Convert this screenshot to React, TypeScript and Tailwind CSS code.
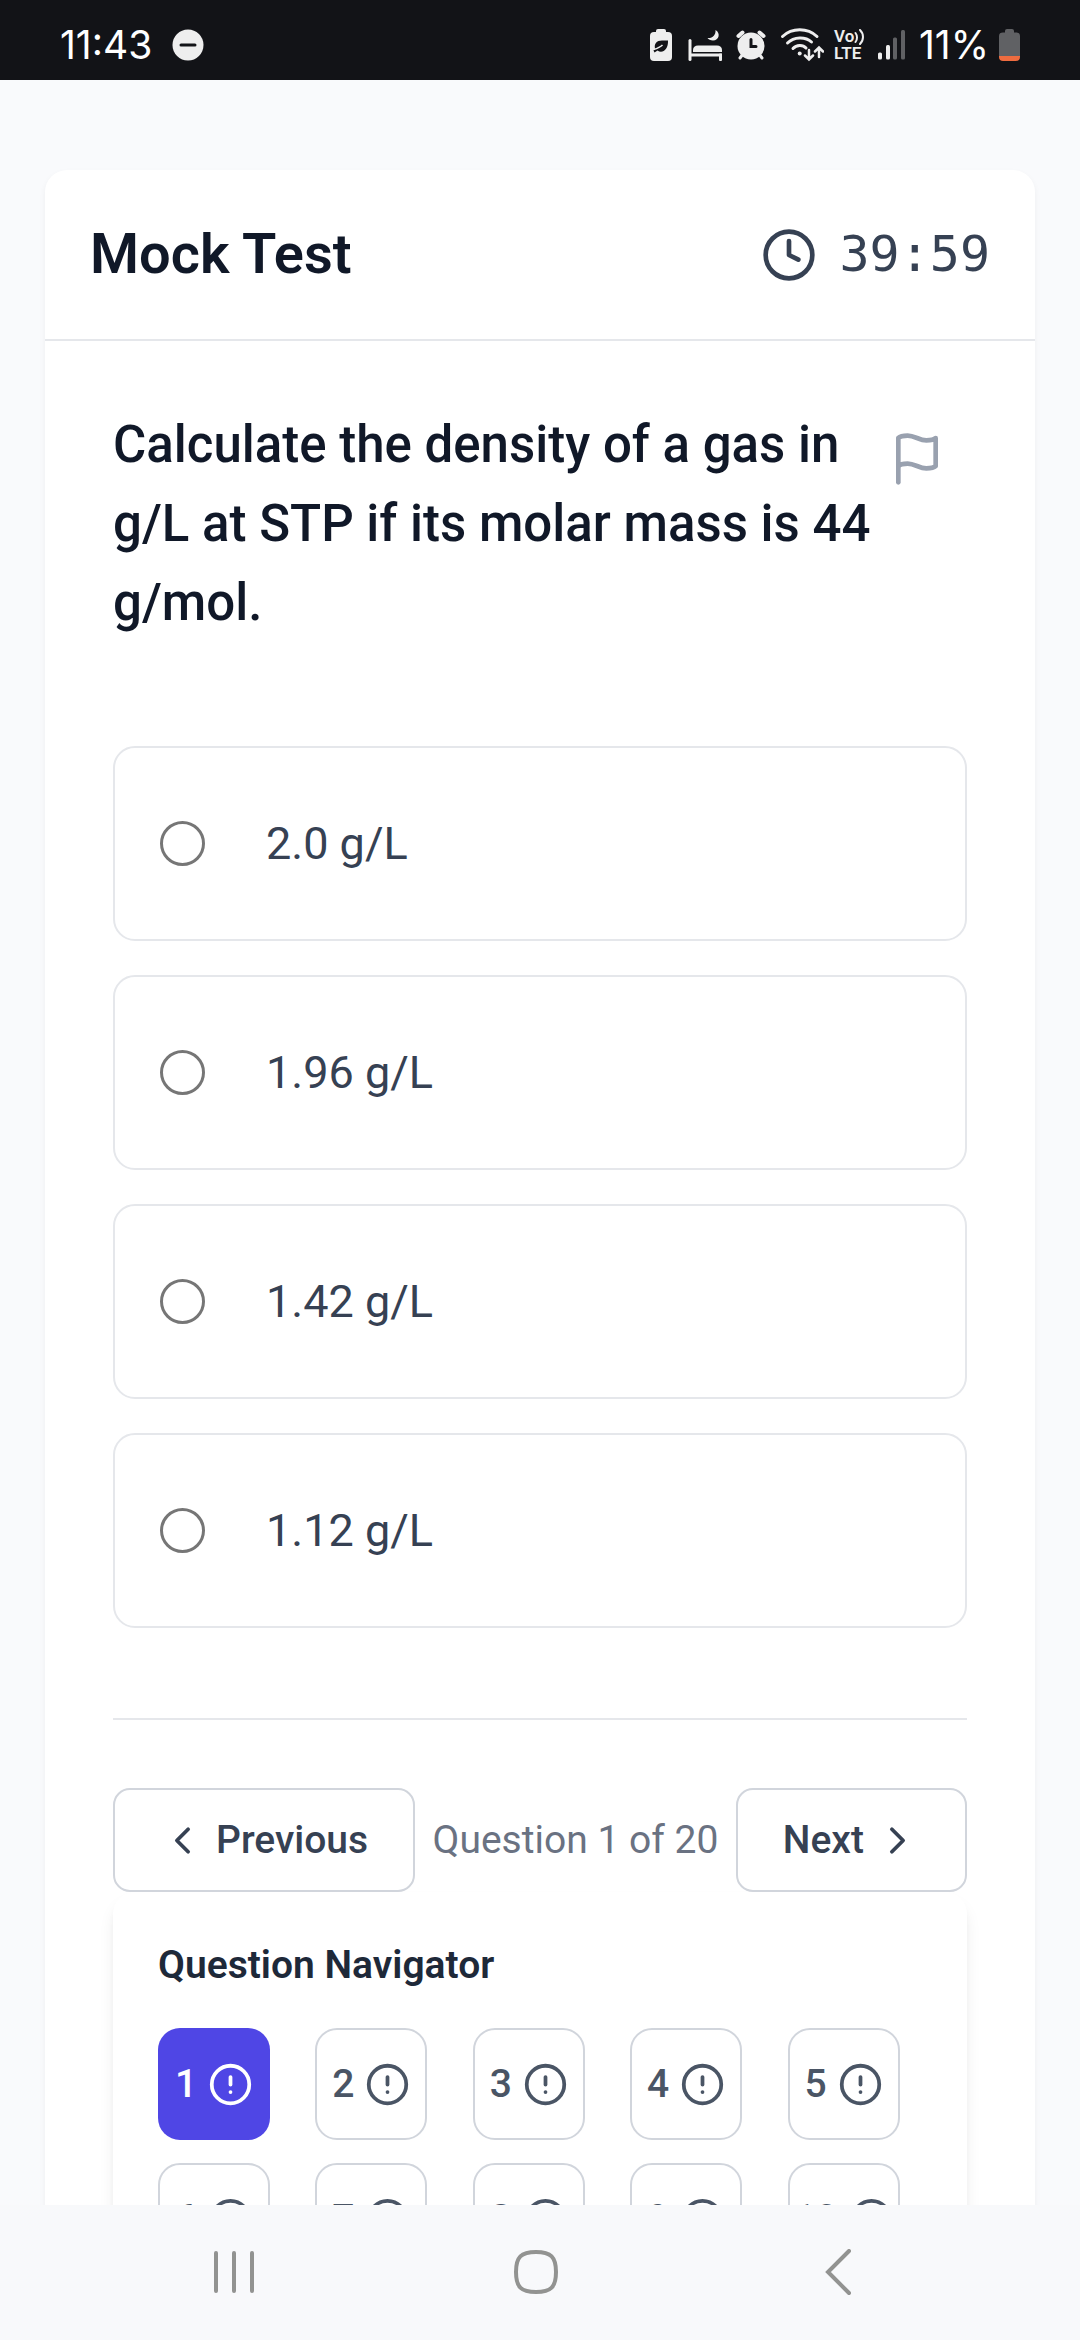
import { useState } from "react";
import { ChevronLeft, ChevronRight, CircleAlert, Clock } from "lucide-react";

const OPTIONS = ["2.0 g/L", "1.96 g/L", "1.42 g/L", "1.12 g/L"];
const TOTAL_QUESTIONS = 20;

function StatusIcons() {
  return (
    <div className="flex items-center gap-2.5 text-[#eeeeee]">
      {/* Power saving battery */}
      <svg className="h-[34px] w-7" viewBox="0 0 28 34" fill="currentColor">
        <rect x="6" y="1" width="10" height="8" rx="2" />
        <rect x="0" y="4" width="22" height="29" rx="4" />
        <path d="M18 12.5H12C6.5 12.5 4 16 5 20.5L3.5 22.5L4.5 24.5L7.5 22.5C12 26 18.5 22 18 12.5Z" fill="#121317" />
        <path d="M3.5 21.5C7 20.5 10 19.5 12.5 17" stroke="#eeeeee" strokeWidth="1.5" fill="none" />
      </svg>
      {/* Sleep mode */}
      <svg className="h-[34px] w-[38px]" viewBox="0 0 38 34" fill="currentColor">
        <rect x="0.5" y="11" width="3" height="22" rx="1.5" />
        <path d="M5 24V22C5 19 7 17.5 10 17.5H29C32 17.5 34 19 34 22V24Z" />
        <rect x="2" y="25.5" width="32" height="3" />
        <rect x="31" y="25.5" width="3" height="7.5" rx="1" />
        <path d="M27.5 2C33 5 31 12.5 25 12.5C22.5 12.5 20.5 11.5 19.5 10C24.5 10.5 28 7 27.5 2Z" />
      </svg>
      {/* Alarm */}
      <svg className="h-[34px] w-[33px]" viewBox="0 0 33 34" fill="none" stroke="currentColor" strokeLinecap="round">
        <path d="M2.5 8L6.5 4.500M23.5 4.500L27.5 8" strokeWidth="4" />
        <path d="M7 26L4 30M23 26L26 30" strokeWidth="3" />
        <circle cx="15" cy="18" r="13.5" fill="currentColor" stroke="none" />
        <path d="M15 11.5V18.5H20" stroke="#121317" strokeWidth="3" />
      </svg>
      {/* Wi-Fi with traffic arrows */}
      <svg className="h-[34px] w-[45px]" viewBox="0 0 45 34" fill="none" stroke="currentColor" strokeWidth="3" strokeLinecap="round">
        <path d="M3.5 8.5C13 -0.5 28.5 -0.5 38 8.5" />
        <path d="M8.5 15C15 8.5 26.5 8.5 32.5 14" />
        <path d="M14 20.5C17.5 16.5 24 16.5 27 20" />
        <circle cx="20.7" cy="25.5" r="2" fill="currentColor" stroke="none" />
        <path d="M30 22V31M26 27.5L30 31.500L34 27.5M40 29V20M36 23.5L40 19.5L44 23.5" strokeWidth="2.5" />
      </svg>
      <div className="w-[34px] text-[17px] leading-[17px] font-semibold">
        <div className="flex items-center">
          Vo
          <svg className="h-4 w-[11px]" viewBox="0 0 11 16" fill="none" stroke="currentColor" strokeWidth="2" strokeLinecap="round">
            <path d="M1.5 4C3.5 6.5 3.5 10.5 1.5 13M6 1C10 5 10 11 6 15" />
          </svg>
        </div>
        <div>LTE</div>
      </div>
      {/* Signal */}
      <svg className="h-[34px] w-[31px]" viewBox="0 0 31 34" fill="currentColor">
        <rect x="0" y="24.5" width="4" height="7" rx="1.5" />
        <rect x="8" y="17" width="4" height="14.5" rx="1.5" />
        <rect x="15" y="9.5" width="4" height="22" rx="1.5" fill="#606164" />
        <rect x="23" y="2" width="4" height="29.5" rx="1.5" fill="#606164" />
      </svg>
      <span className="font-['Inter',sans-serif] text-[39px] leading-10 text-white">11%</span>
      <svg className="h-[34px] w-[21px]" viewBox="0 0 21 34">
        <rect x="6" y="1" width="9" height="8" rx="2" fill="#606164" />
        <path d="M0 8C0 5.5 1.5 4.5 4 4.5H17C19.5 4.5 21 5.5 21 8V28H0Z" fill="#606164" />
        <path d="M0 28H21V29C21 31.5 19.5 33 17 33H4C1.5 33 0 31.5 0 29Z" fill="#ee6c40" />
      </svg>
    </div>
  );
}

function StatusBar() {
  return (
    <div className="flex h-20 shrink-0 items-center justify-between bg-[#121317] px-[60px] pt-2.5">
      <div className="flex items-center gap-5">
        <span className="font-['Inter',sans-serif] text-[39px] leading-10 text-white">11:43</span>
        <svg className="h-8 w-8" viewBox="0 0 32 32">
          <circle cx="16" cy="16" r="15.5" fill="#eeeeee" />
          <path d="M9 16H23" stroke="#121317" strokeWidth="3" strokeLinecap="round" />
        </svg>
      </div>
      <StatusIcons />
    </div>
  );
}

function SystemNav() {
  return (
    <nav className="grid h-[135px] shrink-0 grid-cols-3 items-center justify-items-center bg-[#f8f9fb] pr-[91px] pl-[83px] text-[#929391]">
      <button aria-label="Recent apps">
        <svg className="h-12 w-12" viewBox="0 0 48 48" fill="none" stroke="currentColor" strokeWidth="4" strokeLinecap="round">
          <path d="M6 4V42M24 4V42M42 4V42" />
        </svg>
      </button>
      <button aria-label="Home">
        <svg className="h-12 w-12" viewBox="0 0 48 48" fill="none" stroke="currentColor" strokeWidth="4">
          <path d="M24 3C39 3 44 8 44 23C44 38 39 43 24 43C9 43 4 38 4 23C4 8 9 3 24 3Z" />
        </svg>
      </button>
      <button aria-label="Back">
        <svg className="h-12 w-12" viewBox="0 0 48 48" fill="none" stroke="currentColor" strokeWidth="4" strokeLinecap="round">
          <path d="M35 2L14 23L35 44" />
        </svg>
      </button>
    </nav>
  );
}

export default function App() {
  const [current, setCurrent] = useState(1);
  const [answers, setAnswers] = useState<Record<number, string>>({});

  return (
    <div className="flex h-screen flex-col bg-[#f9fafc] font-['Roboto',sans-serif]">
      <StatusBar />

      <main className="min-h-0 flex-1 overflow-y-auto px-[45px] pt-[90px] [scrollbar-width:none]">
        <div className="rounded-[22px] bg-white shadow-[0_3px_6px_rgba(0,0,0,0.05)]">
          {/* Header */}
          <header className="flex items-center justify-between border-b-2 border-gray-200 p-[45px]">
            <h1 className="text-[56px] leading-[79px] font-semibold text-gray-900">Mock Test</h1>
            <div className="flex items-center gap-[22px] text-gray-700">
              <Clock size={56} />
              <span className="font-['DejaVu_Sans_Mono',monospace] text-[50px] leading-[79px]">39:59</span>
            </div>
          </header>

          <div className="px-[68px] pt-16 pb-[68px]">
            {/* Question */}
            <div className="mb-[104px] flex items-start justify-between">
              <h2 className="text-[51px] leading-[79px] font-medium text-gray-900">
                Calculate the density of a gas in g/L at STP if its molar mass is 44 g/mol.
              </h2>
              <button aria-label="Flag question" className="shrink-0 py-[26px] pr-[22px] pl-4 text-gray-400">
                <svg className="h-14 w-14" viewBox="0 0 24 24" fill="none" stroke="currentColor" strokeWidth="2" strokeLinecap="round" strokeLinejoin="round">
                  <path d="M4 15s1-1 4-1 5 2 8 2 4-1 4-1V3s-1 1-4 1-5-2-8-2-4 1-4 1z" />
                  <path d="M4 22v-7" />
                </svg>
              </button>
            </div>

            {/* Options */}
            <div className="space-y-[34px]">
              {OPTIONS.map((option) => (
                <label
                  key={option}
                  className="flex items-center gap-[61px] rounded-[22px] border-2 border-gray-200 px-[45px] py-[60px] text-[45px] leading-[71px] text-gray-700"
                >
                  <input
                    type="radio"
                    name="answer"
                    checked={answers[current] === option}
                    onChange={() => setAnswers((prev) => ({ ...prev, [current]: option }))}
                    className="h-[45px] w-[45px] shrink-0 appearance-none rounded-full border-3 border-[#767676] checked:border-[14px] checked:border-[#4f46e5]"
                  />
                  {option}
                </label>
              ))}
            </div>

            {/* Pager */}
            <div className="mt-[90px] flex items-center justify-between border-t-2 border-gray-200 pt-[68px] text-[39px] leading-14">
              <button
                onClick={() => setCurrent((c) => Math.max(1, c - 1))}
                className="flex items-center gap-[11px] rounded-[17px] border-2 border-gray-300 px-[45px] py-[22px] font-medium text-gray-700"
              >
                <ChevronLeft size={45} />
                Previous
              </button>
              <span className="text-gray-500">
                Question {current} of {TOTAL_QUESTIONS}
              </span>
              <button
                onClick={() => setCurrent((c) => Math.min(TOTAL_QUESTIONS, c + 1))}
                className="flex items-center gap-[11px] rounded-[17px] border-2 border-gray-300 px-[45px] py-[22px] font-medium text-gray-700"
              >
                Next
                <ChevronRight size={45} />
              </button>
            </div>

            {/* Question Navigator */}
            <section className="rounded-[22px] bg-white p-[45px] shadow-[0_11px_17px_-3px_rgba(0,0,0,0.1),0_6px_11px_-6px_rgba(0,0,0,0.1)]">
              <h3 className="mb-[35px] text-[39px] leading-14 font-semibold text-gray-800">Question Navigator</h3>
              <div className="grid grid-cols-5 gap-[23px]">
                {Array.from({ length: TOTAL_QUESTIONS }, (_, i) => i + 1).map((n) => (
                  <button
                    key={n}
                    onClick={() => setCurrent(n)}
                    className={`flex h-28 w-28 items-center justify-center gap-[11px] rounded-[22px] text-[39px] leading-14 font-medium ${
                      n === current ? "bg-[#4f46e5] text-white" : "border-2 border-gray-300 text-gray-600"
                    }`}
                  >
                    {n}
                    <CircleAlert size={45} className="shrink-0" />
                  </button>
                ))}
              </div>
            </section>
          </div>
        </div>
      </main>

      <SystemNav />
    </div>
  );
}
